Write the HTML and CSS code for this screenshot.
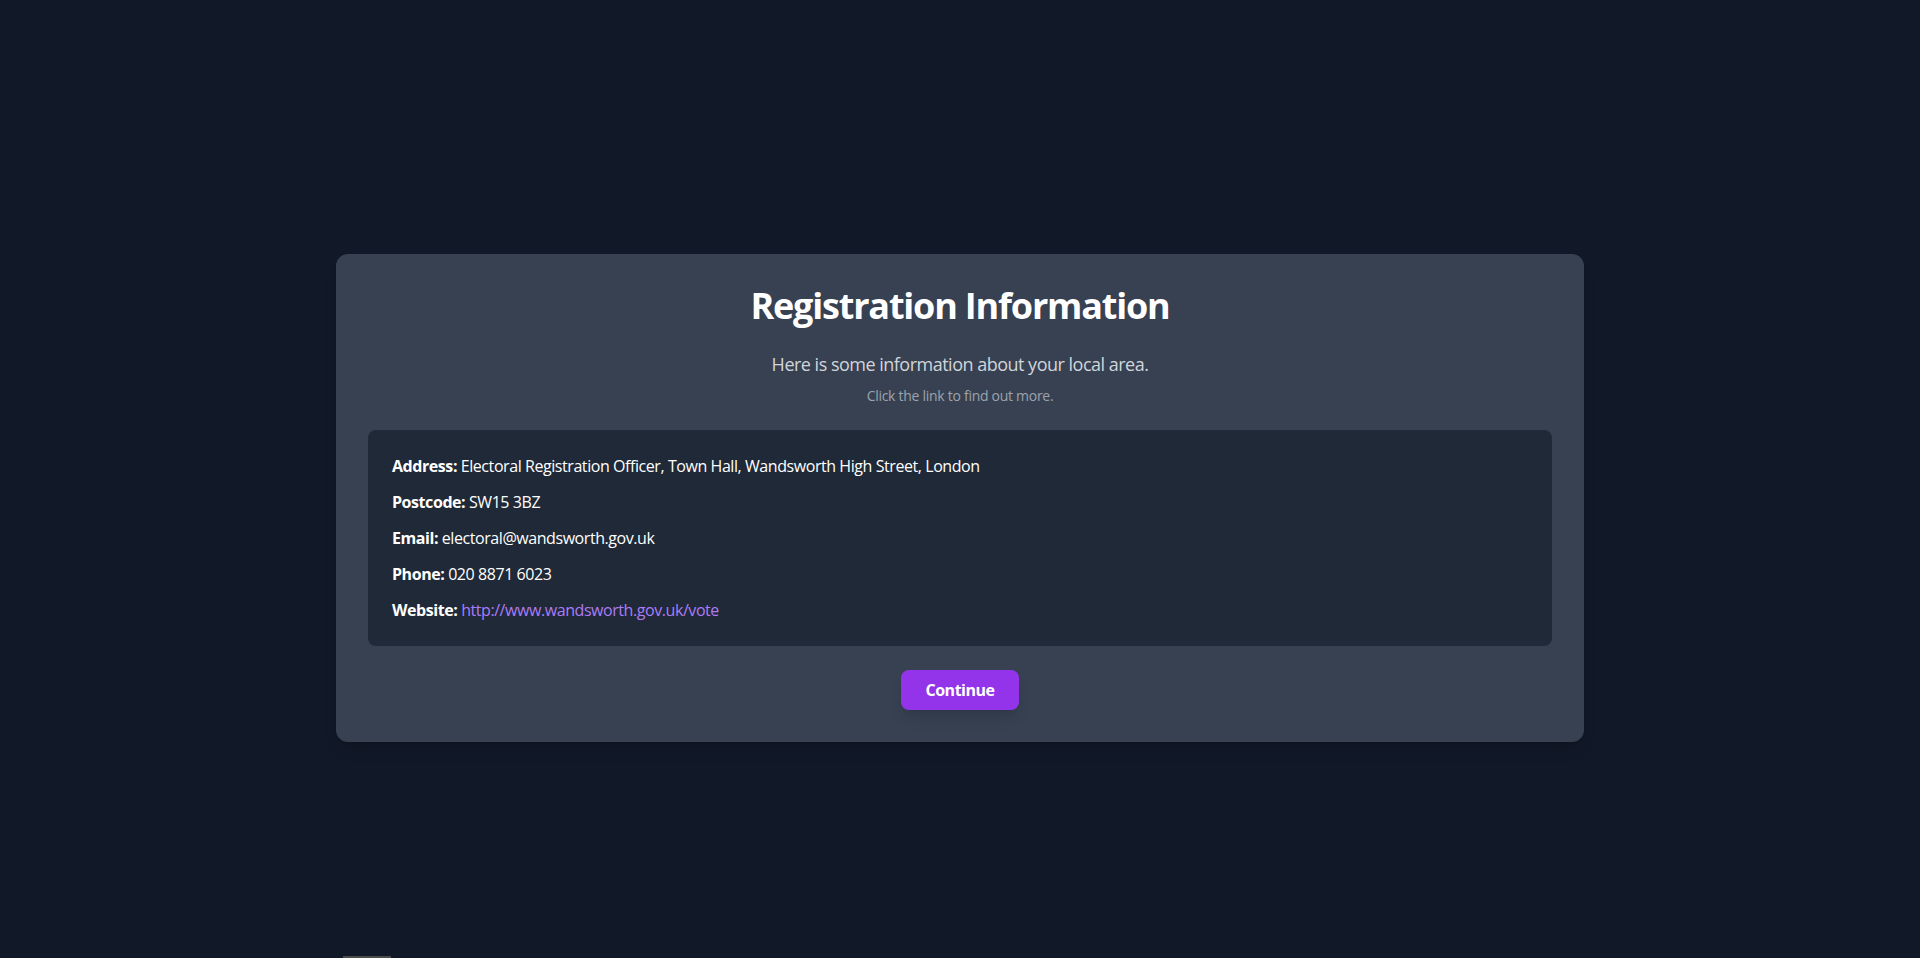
FILE: index.html
```html
<!DOCTYPE html>
<html lang="en">
<head>
<meta charset="utf-8">
<title>Registration Information</title>
<link rel="stylesheet" href="styles.css">
</head>
<body>
<main class="page">
  <section class="card">
    <h1 class="title">Registration Information</h1>
    <p class="lead">Here is some information about your local area.</p>
    <p class="hint">Click the link to find out more.</p>
    <div class="info">
      <p class="row"><strong>Address:</strong> Electoral Registration Officer, Town Hall, Wandsworth High Street, London</p>
      <p class="row"><strong>Postcode:</strong> SW15 3BZ</p>
      <p class="row"><strong>Email:</strong> electoral@wandsworth.gov.uk</p>
      <p class="row"><strong>Phone:</strong> 020 8871 6023</p>
      <p class="row"><strong>Website:</strong> <a class="link" href="#">http://www.wandsworth.gov.uk/vote</a></p>
    </div>
    <div class="actions">
      <button class="btn" type="button">Continue</button>
    </div>
  </section>
</main>
<div class="edge-bar"></div>
</body>
</html>
```

FILE: styles.css
```css
* { box-sizing: border-box; }
html, body { margin: 0; padding: 0; }
body {
  background: #111827;
  font-family: "Segoe UI", "Open Sans", "Noto Sans", sans-serif;
  color: #ffffff;
}
.page {
  min-height: 100vh;
  padding-top: 38px;
  display: flex;
  align-items: center;
  justify-content: center;
}
.card {
  width: 1248px;
  background: #374151;
  border-radius: 12px;
  padding: 32px;
  text-align: center;
  box-shadow: 0 10px 15px -3px rgba(0,0,0,0.1), 0 4px 6px -4px rgba(0,0,0,0.1);
}
.title {
  margin: 0 0 24px;
  font-size: 36px;
  line-height: 40px;
  font-weight: 700;
  letter-spacing: -0.033em;
  color: #ffffff;
}
.lead {
  margin: 0 0 8px;
  font-size: 18px;
  line-height: 28px;
  letter-spacing: -0.028em;
  color: #d1d5db;
}
.hint {
  margin: 0 0 24px;
  font-size: 14px;
  line-height: 20px;
  letter-spacing: -0.02em;
  color: #9ca3af;
}
.info {
  background: #1f2937;
  border-radius: 8px;
  padding: 24px;
  text-align: left;
  display: flex;
  flex-direction: column;
  gap: 12px;
}
.row {
  margin: 0;
  font-size: 16px;
  line-height: 24px;
  letter-spacing: -0.027em;
  color: #ffffff;
}
.row strong { font-weight: 700; }
.link {
  color: #ad7bf7;
  text-decoration: none;
}
.actions {
  margin-top: 24px;
  display: flex;
  justify-content: center;
}
.btn {
  font-family: inherit;
  font-size: 16px;
  line-height: 24px;
  font-weight: 700;
  letter-spacing: -0.03em;
  color: #ffffff;
  background: #9333ea;
  border: 0;
  border-radius: 8px;
  padding: 8px 24px;
  box-shadow: 0 10px 15px -3px rgba(0,0,0,0.1), 0 4px 6px -4px rgba(0,0,0,0.1);
  cursor: pointer;
}
.edge-bar {
  position: fixed;
  left: 343px;
  bottom: 0;
  width: 48px;
  height: 2px;
  background: #4b4b4b;
}
```
